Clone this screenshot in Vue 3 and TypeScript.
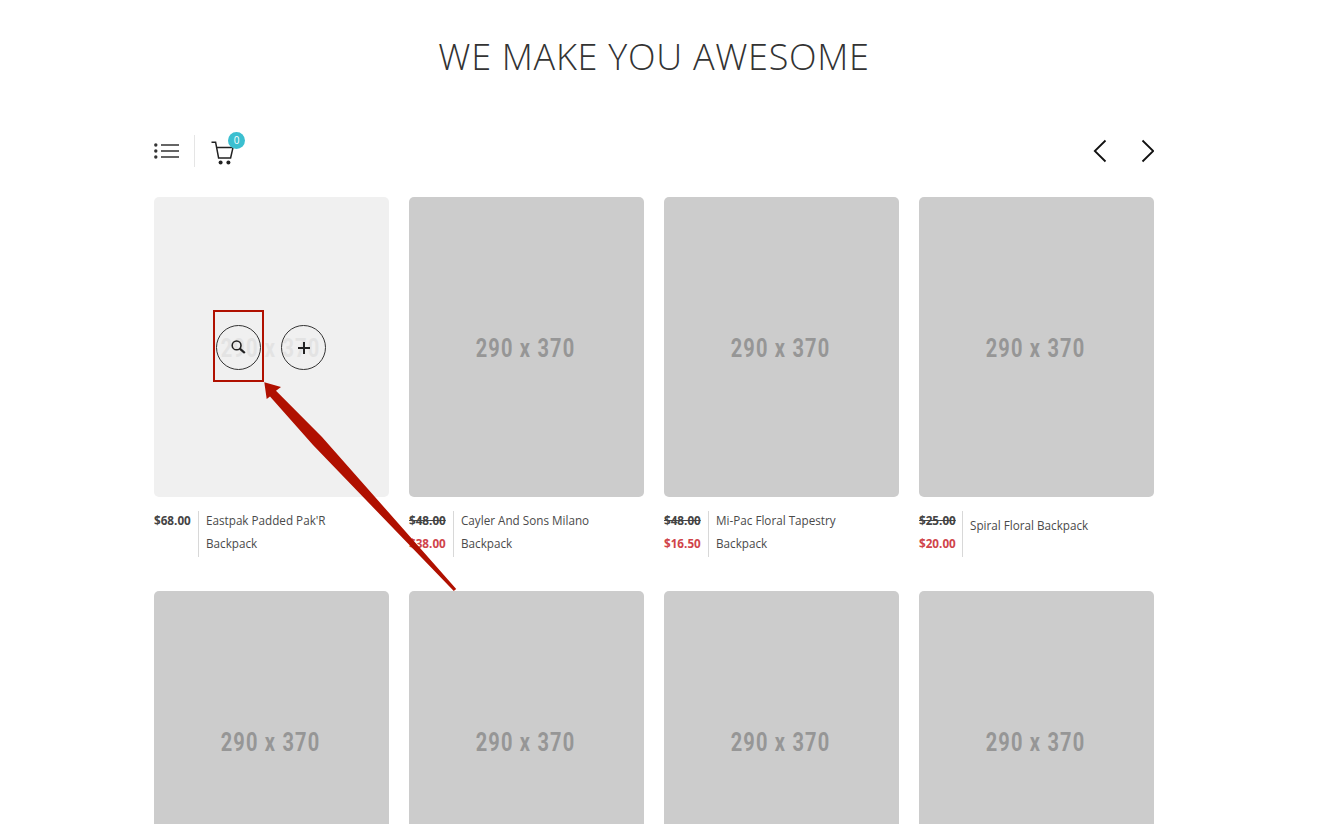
<template>
  <div class="page">
    <h2 class="title">WE MAKE YOU AWESOME</h2>

    <div class="toolbar">
      <div class="tools">
        <button class="listBtn" type="button" aria-label="List">
          <svg width="25" height="16" viewBox="0 0 25 16" fill="none">
            <circle cx="1.8" cy="2" r="1.7" fill="#333" />
            <circle cx="1.8" cy="8" r="1.7" fill="#333" />
            <circle cx="1.8" cy="14" r="1.7" fill="#333" />
            <path d="M7 2H25M7 8H25M7 14H25" stroke="#333" stroke-width="1.5" />
          </svg>
        </button>
        <span class="sep"></span>
        <div class="cart">
          <svg width="23" height="24" viewBox="0 0 23 24" fill="none">
            <path d="M0.5 1.2H4.6L7.6 17H19.6L22 6.6H5.6" stroke="#222" stroke-width="1.5" />
            <circle cx="9.6" cy="21.6" r="2" fill="#222" />
            <circle cx="17.4" cy="21.6" r="2" fill="#222" />
          </svg>
          <span class="badge">0</span>
        </div>
      </div>
      <div class="nav">
        <svg width="14" height="24" viewBox="0 0 14 24" fill="none">
          <path d="M12.5 1.5L1.8 12L12.5 22.5" stroke="#111" stroke-width="1.8" />
        </svg>
        <svg width="14" height="24" viewBox="0 0 14 24" fill="none">
          <path d="M2.5 1.5L13.2 12L2.5 22.5" stroke="#111" stroke-width="1.8" />
        </svg>
      </div>
    </div>

    <div class="grid">
      <article v-for="(p, i) in products" :key="i" class="card">
        <div class="thumb" :class="{ hovered: p.hover }">
          <span class="size">290 x 370</span>
          <div v-if="p.hover" class="actions">
            <button class="round" type="button" aria-label="Quick view">
              <svg class="searchIcon" width="15" height="14" viewBox="0 0 15 14" fill="none">
                <circle cx="5.6" cy="5.4" r="4.4" stroke="#222" stroke-width="1.6" />
                <path d="M8.8 8.6L13.8 13" stroke="#222" stroke-width="2.3" />
              </svg>
            </button>
            <button class="round" type="button" aria-label="Add">
              <svg width="12" height="12" viewBox="0 0 12 12" fill="none">
                <path d="M6 0V12M0 6H12" stroke="#222" stroke-width="2" />
              </svg>
            </button>
          </div>
        </div>
        <div v-if="p.name" class="info" :class="{ single: p.single }">
          <div class="prices">
            <template v-if="p.old">
              <del class="old">{{ p.old }}</del>
              <span class="sale">{{ p.price }}</span>
            </template>
            <span v-else class="regular">{{ p.price }}</span>
          </div>
          <div class="name"><span class="nameText">{{ p.name }}</span></div>
        </div>
      </article>
    </div>

    <div class="marker"></div>
    <svg class="arrow" width="210" height="225" viewBox="0 0 210 225" fill="none">
      <path
        d="M10.3 7.3L27 12L22 15.8L68 62L202.2 213.9L199.8 216.1L59 70L16 21.5L12.7 24Z"
        fill="#b01000"
      />
    </svg>
  </div>
</template>

<script setup lang="ts">
interface Product {
  name?: string
  price?: string
  old?: string
  hover?: boolean
  single?: boolean
}

const products: Product[] = [
  { name: "Eastpak Padded Pak'R Backpack", price: '$68.00', hover: true },
  { name: 'Cayler And Sons Milano Backpack', price: '$38.00', old: '$48.00' },
  { name: 'Mi-Pac Floral Tapestry Backpack', price: '$16.50', old: '$48.00' },
  { name: 'Spiral Floral Backpack', price: '$20.00', old: '$25.00', single: true },
  {},
  {},
  {},
  {},
]
</script>

<style>
html,
body {
  overflow: hidden;
  background: #fff;
}
</style>

<style scoped>
.page {
  position: relative;
  width: 1000px;
  height: 824px;
  margin-left: 154px;
  overflow: hidden;
  font-family: "Open Sans", "Noto Sans", sans-serif;
  color: #444;
}

.title {
  margin: 0;
  padding-top: 34px;
  height: 46px;
  line-height: 46px;
  text-align: center;
  font-size: 36px;
  font-weight: 300;
  letter-spacing: 0.72px;
  color: #333;
}

.toolbar {
  display: flex;
  justify-content: space-between;
  align-items: center;
  margin-top: 54px;
  height: 34px;
}

.tools {
  display: flex;
  align-items: center;
}

.listBtn {
  display: flex;
  padding: 0;
  border: none;
  background: none;
}

.sep {
  width: 1px;
  height: 32px;
  margin: 0 16px 0 15px;
  background: #e5e5e5;
}

.cart {
  position: relative;
  display: flex;
  margin-top: 4px;
}

.badge {
  position: absolute;
  top: -9px;
  right: -11px;
  width: 17px;
  height: 17px;
  border-radius: 50%;
  background: #3bbfd0;
  color: #fff;
  font-size: 10px;
  line-height: 17px;
  text-align: center;
}

.nav {
  display: flex;
  gap: 33px;
}

.grid {
  display: grid;
  grid-template-columns: repeat(4, 235px);
  column-gap: 20px;
  margin-top: 29px;
}

.card {
  height: 394px;
}

.thumb {
  position: relative;
  display: flex;
  align-items: center;
  justify-content: center;
  height: 300px;
  border-radius: 5px;
  background: #ccc;
}

.thumb.hovered {
  background: #f0f0f0;
}

.size {
  padding: 2px 2px 0 0;
  font-family: Roboto, "Liberation Sans", sans-serif;
  font-size: 25px;
  font-weight: 700;
  letter-spacing: 1.5px;
  color: #969696;
  transform: scaleX(0.8);
}

.hovered .size {
  color: #e3e3e3;
}

.actions {
  position: absolute;
  top: 128px;
  left: 62px;
  display: flex;
  gap: 20px;
}

.round {
  display: flex;
  align-items: center;
  justify-content: center;
  width: 45px;
  height: 45px;
  padding: 0;
  border: 1px solid #333;
  border-radius: 50%;
  background: none;
}

.searchIcon {
  margin-bottom: 2px;
}

.info {
  display: flex;
  height: 46px;
  margin-top: 14px;
}

.prices {
  display: flex;
  flex-direction: column;
  flex: none;
  width: 44px;
  gap: 4px;
  font-size: 11.7px;
  font-weight: 700;
  line-height: 19px;
}

.old,
.regular {
  color: #444;
}

.sale {
  color: #d0444a;
}

.name {
  flex: 1;
  padding: 0 30px 0 7px;
  border-left: 1px solid #d8d8d8;
  font-size: 11.7px;
  line-height: 23px;
  color: #4a4a4a;
}

.nameText {
  display: block;
  margin-top: -2px;
}

.single .name {
  margin-left: -1px;
}

.single .nameText {
  margin-top: 3px;
}

.marker {
  position: absolute;
  top: 310px;
  left: 59px;
  width: 51px;
  height: 72px;
  box-sizing: border-box;
  border: 2px solid #b01000;
}

.arrow {
  position: absolute;
  top: 375px;
  left: 100px;
}
</style>
